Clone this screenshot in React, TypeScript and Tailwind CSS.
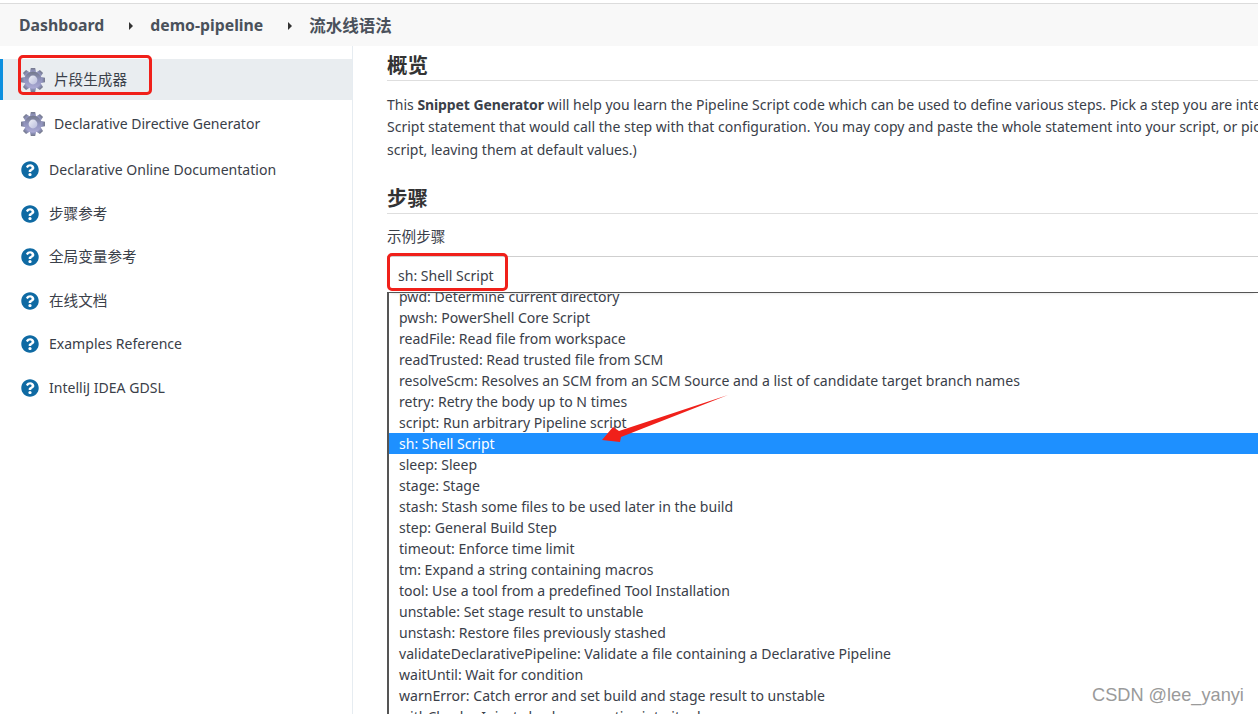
import React from 'react';
import { FaQuestionCircle } from 'react-icons/fa';

const FONT = "font-['Noto_Sans','Noto_Sans_CJK_SC',sans-serif]";

const OPTIONS = [
  'pwd: Determine current directory',
  'pwsh: PowerShell Core Script',
  'readFile: Read file from workspace',
  'readTrusted: Read trusted file from SCM',
  'resolveScm: Resolves an SCM from an SCM Source and a list of candidate target branch names',
  'retry: Retry the body up to N times',
  'script: Run arbitrary Pipeline script',
  'sh: Shell Script',
  'sleep: Sleep',
  'stage: Stage',
  'stash: Stash some files to be used later in the build',
  'step: General Build Step',
  'timeout: Enforce time limit',
  'tm: Expand a string containing macros',
  'tool: Use a tool from a predefined Tool Installation',
  'unstable: Set stage result to unstable',
  'unstash: Restore files previously stashed',
  'validateDeclarativePipeline: Validate a file containing a Declarative Pipeline',
  'waitUntil: Wait for condition',
  'warnError: Catch error and set build and stage result to unstable',
  'withChecks: Inject checks properties into its closure',
];

function Gear() {
  const teeth = [0, 45, 90, 135, 180, 225, 270, 315];
  return (
    <svg width="26" height="26" viewBox="0 0 26 26" className="shrink-0">
      <defs>
        <linearGradient id="gearFill" x1="0" y1="0" x2="0" y2="1">
          <stop offset="0" stopColor="#73788a" />
          <stop offset="0.5" stopColor="#9093bd" />
          <stop offset="1" stopColor="#aeacd6" />
        </linearGradient>
        <linearGradient id="gearHole" x1="0" y1="0" x2="1" y2="1">
          <stop offset="0" stopColor="#eef0f6" />
          <stop offset="1" stopColor="#b9bcdc" />
        </linearGradient>
      </defs>
      <g fill="url(#gearFill)">
        {teeth.map((a) => (
          <polygon key={a} points="9.6,7 10.8,1 15.2,1 16.4,7" transform={`rotate(${a} 13 13)`} />
        ))}
        <circle cx="13" cy="13" r="8.6" />
      </g>
      <circle cx="13" cy="13" r="4.4" fill="url(#gearHole)" />
    </svg>
  );
}

function SideItem({ label, icon, h, active, cjk }: { label: string; icon: 'gear' | 'help'; h: string; active?: boolean; cjk?: boolean }) {
  return (
    <div className={`flex items-center ${h} ${active ? 'bg-[#e9edf0] border-l-[3px] border-[#0b8fdf] pl-[17px]' : 'pl-[20px]'}`}>
      {icon === 'gear' ? (
        <>
          <Gear />
          <span className={`ml-[8px] ${cjk ? 'text-[14.6px]' : ''}`}>{label}</span>
        </>
      ) : (
        <>
          <FaQuestionCircle className="text-[#0f6aa3] text-[18px] ml-[1px] shrink-0" />
          <span className={`ml-[10px] ${cjk ? 'text-[14.6px]' : ''}`}>{label}</span>
        </>
      )}
    </div>
  );
}

export default function App() {
  return (
    <div className={`relative w-[1258px] h-[714px] overflow-hidden bg-white text-[#3a4049] text-[14.05px] ${FONT}`}>
      {/* Breadcrumb */}
      <div className="h-[3px]" />
      <div className="h-[43px] bg-[#f8f8f8] border-t border-[#dcdcdc] flex items-center pl-[19px] pt-[2px] text-[15.8px] font-bold text-[#4a515b]">
        <span>Dashboard</span>
        <span className="ml-[25px] w-0 h-0 border-y-[4px] border-y-transparent border-l-[4px] border-l-[#333]" />
        <span className="ml-[17px]">demo-pipeline</span>
        <span className="ml-[25px] w-0 h-0 border-y-[4px] border-y-transparent border-l-[4px] border-l-[#333]" />
        <span className="ml-[17px] text-[16.5px]">流水线语法</span>
      </div>

      <div className="flex h-[668px]">
        {/* Sidebar */}
        <aside className="w-[353px] shrink-0 border-r border-[#e6ecf1] pt-[13px]">
          <SideItem label="片段生成器" icon="gear" h="h-[41px]" active cjk />
          <SideItem label="Declarative Directive Generator" icon="gear" h="h-[48px]" />
          <SideItem label="Declarative Online Documentation" icon="help" h="h-[44px]" />
          <SideItem label="步骤参考" icon="help" h="h-[43px]" cjk />
          <SideItem label="全局变量参考" icon="help" h="h-[44px]" cjk />
          <SideItem label="在线文档" icon="help" h="h-[43px]" cjk />
          <SideItem label="Examples Reference" icon="help" h="h-[44px]" />
          <SideItem label="IntelliJ IDEA GDSL" icon="help" h="h-[44px]" />
        </aside>

        {/* Main */}
        <main className="flex-1 min-w-0 pl-[34px] whitespace-nowrap">
          <h2 className="h-[35px] border-b border-[#dedede] text-[20.5px] font-bold leading-[39px] text-[#333]">概览</h2>
          <div className="mt-[13px] leading-[22.4px] text-[14px]">
            <p>
              This <b className="tracking-[-0.1px]">Snippet Generator</b> will help you learn the Pipeline Script code which can be used to define various steps. Pick a step you are interested in from the list
            </p>
            <p>Script statement that would call the step with that configuration. You may copy and paste the whole statement into your script, or pick up just the options</p>
            <p>script, leaving them at default values.)</p>
          </div>
          <h2 className="mt-[19px] h-[34px] border-b border-[#dedede] text-[20.5px] font-bold leading-[37px] text-[#333]">步骤</h2>
          <div className="mt-[11px] leading-[22px] text-[14.6px]">示例步骤</div>
          <div className="mt-[9px] h-[36px] border-t border-[#cfcfcf] pl-[11px] pt-[8px] leading-[22px] shadow-[0_4px_4px_-4px_rgba(0,0,0,0.25)]">sh: Shell Script</div>
          <div className="h-[440px] overflow-hidden border-2 border-r-0 border-b-0 border-[#555] border-t-[1.5px]">
            <div className="-mt-[7px]">
              {OPTIONS.map((o) => (
                <div key={o} className={`h-[21px] leading-[21px] pl-[10px] ${o === 'sh: Shell Script' ? 'bg-[#1e90ff] text-white' : ''}`}>
                  {o}
                </div>
              ))}
            </div>
          </div>
        </main>
      </div>

      {/* Annotations */}
      <div className="absolute left-[18px] top-[55px] w-[134px] h-[40px] border-[3px] border-[#f0201a] rounded-[5px]" />
      <div className="absolute left-[387px] top-[253px] w-[121px] h-[38px] border-[3px] border-[#f0201a] rounded-[5px]" />
      <svg className="absolute left-[590px] top-[390px]" width="145" height="60" viewBox="0 0 145 60">
        <polygon points="138,5 31,47 30,52 12,50 23,37 29,41" fill="#f0201a" />
      </svg>
      <div className="absolute left-[1092px] top-[684px] text-[18.2px] leading-[22px] text-[#9a9a9a] font-['Liberation_Sans',sans-serif]">CSDN @lee_yanyi</div>
    </div>
  );
}
